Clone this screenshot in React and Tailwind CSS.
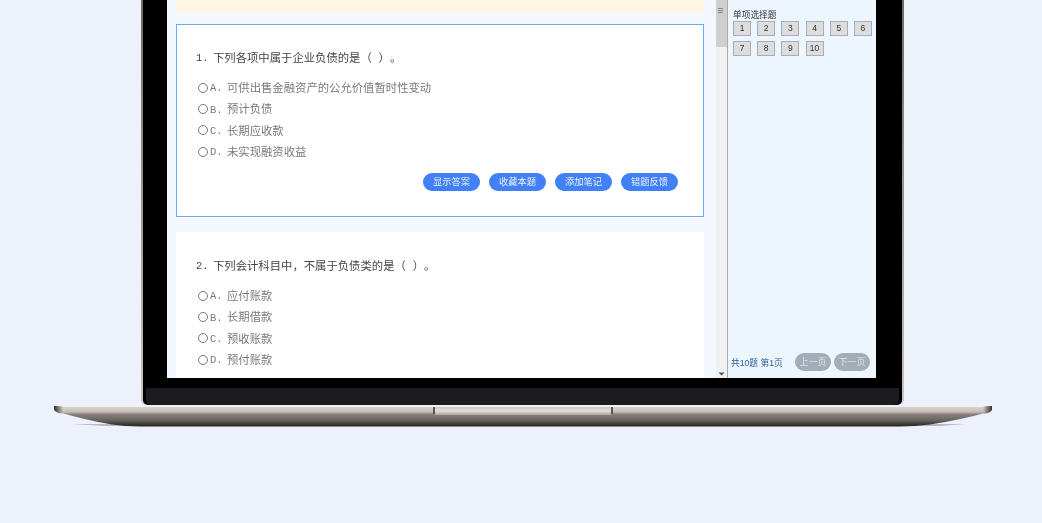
const font = { fontFamily: '"Liberation Mono", "Noto Sans CJK SC", monospace' };
const sans = { fontFamily: '"Liberation Sans", "Noto Sans CJK SC", sans-serif' };

const questions = [
  {
    n: "1.",
    title: "下列各项中属于企业负债的是（ ）。",
    active: true,
    options: [
      ["A.", "可供出售金融资产的公允价值暂时性变动"],
      ["B.", "预计负债"],
      ["C.", "长期应收款"],
      ["D.", "未实现融资收益"],
    ],
  },
  {
    n: "2.",
    title: "下列会计科目中，不属于负债类的是（ ）。",
    active: false,
    options: [
      ["A.", "应付账款"],
      ["B.", "长期借款"],
      ["C.", "预收账款"],
      ["D.", "预付账款"],
    ],
  },
];

const actions = ["显示答案", "收藏本题", "添加笔记", "错题反馈"];
const numbers = [1, 2, 3, 4, 5, 6, 7, 8, 9, 10];

function Card({ q }) {
  return (
    <div
      className={
        q.active
          ? "h-[193px] shrink-0 border border-[#6fa8ee] bg-white pl-[19px] pr-[25px] pt-[22px]"
          : "flex-1 border border-white bg-white pl-[19px] pr-[25px] pt-[22px]"
      }
    >
      <div className="flex h-[21px] items-center text-[11.35px] text-[#444] [text-spacing-trim:space-all]">
        <span className="w-[17px] shrink-0 pt-[3px] text-[10.5px]">{q.n}</span>
        <span className="pt-[4px]">{q.title}</span>
      </div>
      <div className="ml-[2px] mt-[9px] flex flex-col">
        {q.options.map(([k, t]) => (
          <div key={k} className="flex h-[21.3px] items-center text-[11.35px] text-[#7a7a7a]">
            <span className="h-[10px] w-[10px] shrink-0 rounded-full border border-[#777] bg-white" />
            <span className="ml-[2px] w-[17px] shrink-0 pt-[3px] text-[10.5px]">{k}</span>
            <span className="pt-[4px]">{t}</span>
          </div>
        ))}
      </div>
      {q.active && (
        <div className="mt-[11px] flex justify-end gap-[9px] pr-[-1px]">
          {actions.map((a) => (
            <div
              key={a}
              className="flex h-[18px] w-[57px] items-center justify-center rounded-full bg-[#4180f6] pt-[2px] text-[9.3px] text-[#e8f0ff]"
            >
              {a}
            </div>
          ))}
        </div>
      )}
    </div>
  );
}

function Scrollbar() {
  return (
    <div className="flex w-[12px] shrink-0 flex-col items-center justify-between border-r border-[#a9adb2] bg-[#f0f0f0] pb-[2px]">
      <div className="flex h-[47px] w-[11px] flex-col items-center gap-[1px] bg-[#cfcfcf] pr-[2px] pt-[8px]">
        <span className="h-[1px] w-[5px] bg-[#888]" />
        <span className="h-[1px] w-[5px] bg-[#888]" />
        <span className="h-[1px] w-[5px] bg-[#888]" />
      </div>
      <svg width="7" height="4" viewBox="0 0 7 4">
        <path d="M0.5 0.5H6.5L3.5 3.5Z" fill="#555" />
      </svg>
    </div>
  );
}

function Sidebar() {
  return (
    <div className="flex flex-1 flex-col justify-between bg-[#edf5fe] pb-[7px]" style={sans}>
      <div className="pl-[5px] pt-[8px]">
        <div className="h-[13px] pt-[1px] text-[8.7px] leading-[13px] text-[#333]">单项选择题</div>
        <div className="grid grid-cols-[repeat(6,18px)] gap-x-[6.2px] gap-y-[5.5px]">
          {numbers.map((n) => (
            <div
              key={n}
              className="flex h-[14.5px] items-center justify-center border border-[#a6adbd] bg-[#dddddd] text-[8.5px] text-[#333]"
            >
              {n}
            </div>
          ))}
        </div>
      </div>
      <div className="flex items-center pl-[3px]">
        <span className="w-[64px] whitespace-nowrap pt-[3px] text-[8.7px] text-[#2f5d9c]">共10题 第1页</span>
        <div className="flex gap-[3px]">
          <div className="flex h-[18px] w-[36px] items-center justify-center rounded-full bg-[#a4acb8] pt-[2px] text-[9px] text-[#dfe3e8]">上一页</div>
          <div className="flex h-[18px] w-[36px] items-center justify-center rounded-full bg-[#a4acb8] pt-[2px] text-[9px] text-[#dfe3e8]">下一页</div>
        </div>
      </div>
    </div>
  );
}

function Base() {
  return (
    <svg className="ml-[54px] block blur-[0.4px]" width="938" height="24" viewBox="54 405 938 24">
      <defs>
        <linearGradient id="body" x1="0" y1="406" x2="0" y2="427" gradientUnits="userSpaceOnUse">
          <stop offset="0" stopColor="#ddd5cf" />
          <stop offset="0.28" stopColor="#c6bfb8" />
          <stop offset="0.4" stopColor="#85807b" />
          <stop offset="0.7" stopColor="#66615c" />
          <stop offset="0.9" stopColor="#33302d" />
          <stop offset="1" stopColor="#26241f" />
        </linearGradient>
        <linearGradient id="notch" x1="0" y1="407" x2="0" y2="415" gradientUnits="userSpaceOnUse">
          <stop offset="0" stopColor="#cfc7c1" />
          <stop offset="0.5" stopColor="#e4dcd6" />
          <stop offset="1" stopColor="#a9a39d" />
        </linearGradient>
        <linearGradient id="left" x1="54" y1="0" x2="90" y2="0" gradientUnits="userSpaceOnUse">
          <stop offset="0" stopColor="#2b2a28" />
          <stop offset="0.25" stopColor="#2b2a28" stopOpacity="0" />
        </linearGradient>
        <linearGradient id="right" x1="992" y1="0" x2="956" y2="0" gradientUnits="userSpaceOnUse">
          <stop offset="0" stopColor="#2b2a28" />
          <stop offset="0.25" stopColor="#2b2a28" stopOpacity="0" />
        </linearGradient>
      </defs>
      <path d="M72 424 L105 426 L940 426 L965 424 Z" fill="#55524e" opacity="0.35" />
      <path
        d="M58 407 L988 407 Q992 407 992 410 Q991 412 985 413 Q960 420 930 424.5 Q915 426.5 900 426.5 L140 426.5 Q125 426.5 112 424.5 Q85 420 62 413 Q54 412 54 409 Q54 407 58 407 Z"
        fill="url(#body)"
      />
      <path d="M54 406 H92 V414 H62 Q54 412 54 409 Z" fill="url(#left)" />
      <path d="M992 406 H950 V414 H985 Q992 412 992 409 Z" fill="url(#right)" />
      <rect x="433" y="407" width="2" height="7" fill="#5a5652" />
      <rect x="611" y="407" width="2" height="7" fill="#5a5652" />
      <rect x="435" y="407" width="176" height="8" fill="url(#notch)" />
    </svg>
  );
}

export default function App() {
  return (
    <div className="h-[523px] w-[1042px] overflow-hidden bg-[#ecf1fc]" style={font}>
      <div className="ml-[141px] h-[405px] w-[763px] overflow-hidden rounded-b-[6px] bg-gradient-to-b from-[#6f6a68] to-[#c8c5c3] px-[2px]">
        <div className="h-full rounded-b-[5px] bg-black">
          <div className="ml-[24px] flex h-[378px] w-[709px] overflow-hidden blur-[0.3px]">
            <div className="flex w-[549px] shrink-0 flex-col gap-[12px] bg-[#f3f7fe] pl-[9px] pr-[12px]">
              <div className="h-[12px] shrink-0 bg-[#fdf6e3]" />
              <Card q={questions[0]} />
              <div className="mt-[3px] flex flex-1 flex-col">
                <Card q={questions[1]} />
              </div>
            </div>
            <Scrollbar />
            <Sidebar />
          </div>
          <div className="mx-[3px] mt-[10px] h-[17px] rounded-b-[5px] bg-[#1c1c20]" />
        </div>
      </div>
      <Base />
    </div>
  );
}
